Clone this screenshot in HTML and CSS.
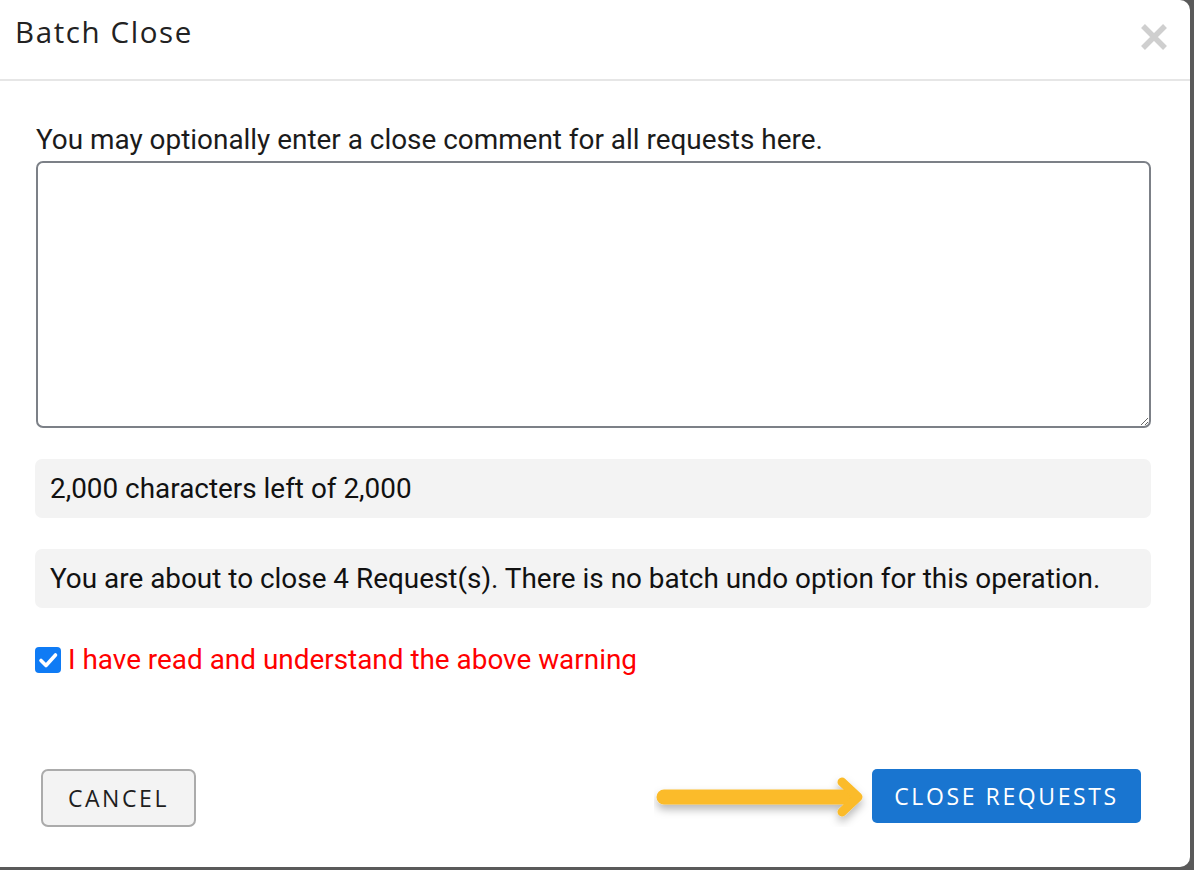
FILE: index.html
```html
<!DOCTYPE html>
<html>
<head>
<meta charset="utf-8">
<link rel="stylesheet" href="styles.css">
</head>
<body>
<div class="backdrop">
  <div class="modal">
    <div class="modal-header">
      <h1 class="modal-title">Batch Close</h1>
      <button class="close-x" aria-label="Close">
        <svg width="28" height="28" viewBox="0 0 28 28"><path d="M3 3 L25 25 M25 3 L3 25" stroke="#cfcfcf" stroke-width="5.5" stroke-linecap="butt"/></svg>
      </button>
    </div>
    <div class="modal-body">
      <label class="field-label" for="cmt">You may optionally enter a close comment for all requests here.</label>
      <textarea id="cmt" class="comment"></textarea>
      <div class="info-box">2,000 characters left of 2,000</div>
      <div class="info-box">You are about to close 4 Request(s). There is no batch undo option for this operation.</div>
      <label class="confirm">
        <span class="check">
          <svg width="26" height="26" viewBox="0 0 26 26"><rect x="0" y="0" width="26" height="26" rx="4" fill="#0f7bf5"/><path d="M6 13.5 L11 18.5 L20.5 8" stroke="#fff" stroke-width="3.6" fill="none" stroke-linecap="round" stroke-linejoin="round"/></svg>
        </span>
        <span class="confirm-text">I have read and understand the above warning</span>
      </label>
    </div>
    <div class="modal-footer">
      <button class="btn btn-cancel">CANCEL</button>
      <div class="primary-wrap">
        <svg class="pointer-arrow" width="220" height="60" viewBox="0 0 220 60">
          <defs>
            <filter id="sh" x="-20%" y="-50%" width="140%" height="200%">
              <feDropShadow dx="0" dy="5" stdDeviation="4" flood-color="#000" flood-opacity="0.28"/>
            </filter>
          </defs>
          <g filter="url(#sh)" stroke="#fbbb29" fill="none" stroke-linecap="round" stroke-linejoin="round">
            <path d="M10 30 L198 30" stroke-width="15"/>
            <path d="M188 15 L204 30 L188 45" stroke-width="9"/>
          </g>
        </svg>
        <button class="btn btn-primary">CLOSE REQUESTS</button>
      </div>
    </div>
  </div>
</div>
</body>
</html>
```
FILE: styles.css
```css
* { box-sizing: border-box; }
html, body { margin: 0; padding: 0; }
body {
  width: 1194px;
  height: 870px;
  background: #5a5a5a;
  overflow: hidden;
  font-family: Roboto, "Liberation Sans", Arial, sans-serif;
}
.backdrop {
  width: 1194px;
  height: 870px;
}
.modal {
  width: 1190px;
  height: 867px;
  background: #fff;
  border-radius: 0 10px 10px 0;
  display: flex;
  flex-direction: column;
}
.modal-header {
  height: 81px;
  border-bottom: 2px solid #e6e6e6;
  display: flex;
  align-items: flex-start;
  justify-content: space-between;
  padding: 0 22px 0 15px;
}
.modal-title {
  margin: 12px 0 0;
  font-family: "Open Sans", Lato, sans-serif;
  font-weight: 400;
  font-size: 29.5px;
  line-height: 40px;
  color: #222;
  letter-spacing: 1.6px;
}
.close-x {
  margin-top: 23px;
  border: 0;
  background: none;
  padding: 0;
  width: 28px;
  height: 28px;
}
.modal-body {
  padding: 42px 40px 0 35px;
  display: flex;
  flex-direction: column;
}
.field-label {
  font-size: 27.9px;
  color: #1b1b1b;
  margin-left: 1px;
  line-height: 33px;
  margin-bottom: 5px;
}
.comment {
  display: block;
  width: 1115px;
  height: 267px;
  border: 2px solid #7c8087;
  border-radius: 7px;
  margin: 0 0 31px 1px;
  resize: vertical;
  font-family: inherit;
  font-size: 20px;
}
.info-box {
  background: #f3f3f3;
  border-radius: 7px;
  height: 59px;
  width: 1116px;
  padding: 0 15px;
  display: flex;
  align-items: center;
  font-size: 27.9px;
  color: #111;
  margin-bottom: 31px;
}
.confirm {
  display: flex;
  align-items: center;
  gap: 7px;
  margin-top: 4px;
}
.check { display: flex; width: 26px; height: 26px; }
.confirm-text {
  color: #ff0000;
  font-size: 27.9px;
  line-height: 33px;
}
.modal-footer {
  margin-top: auto;
  padding: 0 49px 40px 41px;
  display: flex;
  align-items: flex-start;
  justify-content: space-between;
}
.btn {
  font-family: "Open Sans", Lato, sans-serif;
  font-size: 23px;
  letter-spacing: 2.6px;
  cursor: pointer;
}
.btn-cancel {
  width: 155px;
  height: 58px;
  background: #f3f3f3;
  border: 2px solid #ababab;
  border-radius: 7px;
  color: #1e1e1e;
  font-weight: 500;
}
.primary-wrap {
  position: relative;
}
.pointer-arrow {
  position: absolute;
  left: -218px;
  top: -2px;
}
.btn-primary {
  width: 269px;
  height: 54px;
  background: #1975d0;
  border: 0;
  border-radius: 5px;
  color: #fff;
}
```
